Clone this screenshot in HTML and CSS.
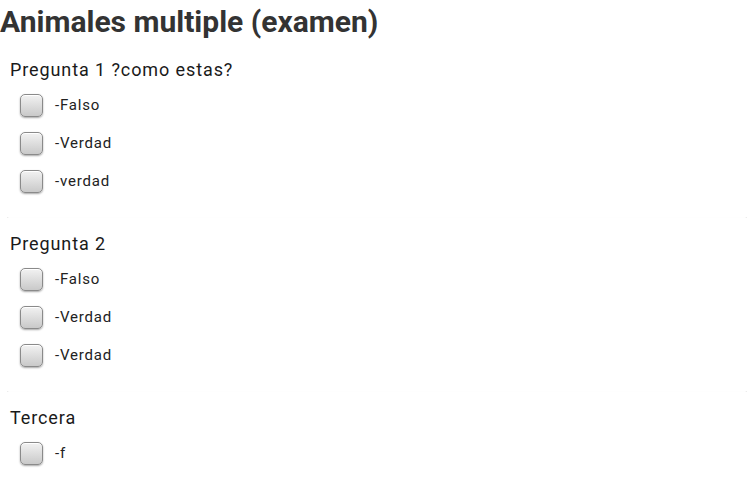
FILE: index.html
```html
<!DOCTYPE html>
<html>

<head>
    <meta charset="UTF-8">
    <meta name="viewport" content="width=device-width, initial-scale=1.0">
    <title>Animales multiple (examen)</title>
    <link rel="stylesheet" href="styles.css">
</head>

<body>
    <h1 class="title">Animales multiple (examen)</h1>

    <div class="pregunta">
        <div class="enunciado">Pregunta 1 ?como estas?</div>
        <label class="opcion"><span class="check"></span>-Falso</label>
        <label class="opcion"><span class="check"></span>-Verdad</label>
        <label class="opcion"><span class="check"></span>-verdad</label>
    </div>
    <div class="separador"></div>

    <div class="pregunta">
        <div class="enunciado">Pregunta 2</div>
        <label class="opcion"><span class="check"></span>-Falso</label>
        <label class="opcion"><span class="check"></span>-Verdad</label>
        <label class="opcion"><span class="check"></span>-Verdad</label>
    </div>
    <div class="separador"></div>

    <div class="pregunta">
        <div class="enunciado">Tercera</div>
        <label class="opcion"><span class="check"></span>-f</label>
    </div>
</body>

</html>
```

FILE: styles.css
```css
body {
    font-family: Roboto, "Liberation Sans", sans-serif;
    margin: 0;
    background-color: #ffffff;
    color: #1a1a1a;
}

.title {
    margin: 0;
    font-size: 30px;
    line-height: 44px;
    font-weight: bold;
    color: #333333;
}

.pregunta {
    padding: 14px 10px 17px 10px;
}

.enunciado {
    font-size: 18px;
    line-height: 24px;
    letter-spacing: 0.9px;
    margin-bottom: 4px;
}

.opcion {
    display: flex;
    align-items: center;
    height: 38px;
    padding-left: 10px;
    font-size: 15px;
    letter-spacing: 0.8px;
    color: #222222;
}

.check {
    width: 21px;
    height: 21px;
    margin-right: 12px;
    border: 1px solid #8a8a8a;
    border-radius: 5px;
    background: linear-gradient(#f2f2f2, #c9c9c9);
    box-shadow: 0 1px 2px rgba(0, 0, 0, 0.35), inset 0 1px 0 #ffffff;
}

.separador {
    margin: 0 9px 0 7px;
    height: 1px;
    background: linear-gradient(to right, #e6e6e6 0, #fefefe 2px, #fefefe calc(100% - 2px), #e6e6e6 100%);
}
```
